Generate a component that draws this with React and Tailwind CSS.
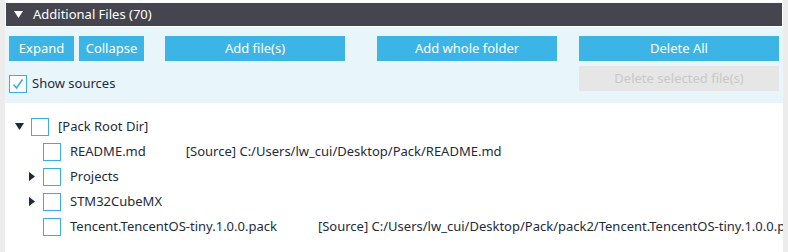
const font = { fontFamily: '"Noto Sans", "Open Sans", sans-serif' };

function Box({ checked }) {
  return (
    <span className="flex h-[18px] w-[18px] shrink-0 items-center justify-center border border-[#3aaee0] bg-white">
      {checked && (
        <svg width="12" height="12" viewBox="0 0 12 12" fill="none">
          <path d="M1.5 6.5 L4.5 10 L10.5 1.5" stroke="#3aaee0" strokeWidth="1.6" />
        </svg>
      )}
    </span>
  );
}

function Caret({ open }) {
  return open ? (
    <svg width="9" height="7" viewBox="0 0 9 7">
      <path d="M0 0 H9 L4.5 7 Z" fill="#1b2a3f" />
    </svg>
  ) : (
    <svg width="6" height="9" viewBox="0 0 6 9">
      <path d="M0 0 L6 4.5 L0 9 Z" fill="#1b2a3f" />
    </svg>
  );
}

function Btn({ w, children, className = '' }) {
  return (
    <button className={`h-[25px] ${w} bg-[#3db4e6] text-[13px] text-white ${className}`}>
      {children}
    </button>
  );
}

const rows = [
  { depth: 0, caret: 'open', name: '[Pack Root Dir]' },
  { depth: 1, name: 'README.md', src: '[Source] C:/Users/lw_cui/Desktop/Pack/README.md', srcX: 'ml-[40px]' },
  { depth: 1, caret: 'closed', name: 'Projects' },
  { depth: 1, caret: 'closed', name: 'STM32CubeMX' },
  {
    depth: 1,
    name: 'Tencent.TencentOS-tiny.1.0.0.pack',
    src: '[Source] C:/Users/lw_cui/Desktop/Pack/pack2/Tencent.TencentOS-tiny.1.0.0.pack',
    srcX: 'ml-[41px]',
  },
];

export default function App() {
  return (
    <div className="flex h-[252px] w-[788px] overflow-hidden bg-white text-[#1e2b3c]" style={font}>
      <div className="w-[5px] shrink-0 bg-[#ececec]" />
      <div className="flex min-w-0 flex-1 flex-col pt-[3px]">
        <div className="ml-[1px] mr-[1px] flex h-[23px] items-center bg-[#45454f] pl-[8px] text-[13px] text-white">
          <svg width="9" height="7" viewBox="0 0 9 7">
            <path d="M0 0 H9 L4.5 7 Z" fill="#ffffff" />
          </svg>
          <span className="ml-[10px]">Additional Files (70)</span>
        </div>
        <div className="mt-[1px] flex h-[76px] flex-col bg-[#e8f6fc] pl-[4px] pt-[9px]">
          <div className="flex">
            <Btn w="w-[65px]">Expand</Btn>
            <Btn w="w-[65px]" className="ml-[5px]">Collapse</Btn>
            <Btn w="w-[180px]" className="ml-[21px]">Add file(s)</Btn>
            <Btn w="w-[180px]" className="ml-[32px]">Add whole folder</Btn>
            <Btn w="w-[200px]" className="ml-[22px]">Delete All</Btn>
          </div>
          <div className="mt-[5px] flex">
            <label className="flex items-center self-start pt-[8px]">
              <Box checked />
              <span className="ml-[5px] text-[13px]">Show sources</span>
            </label>
            <button className="ml-auto mr-[4px] h-[25px] w-[200px] bg-[#e6e6e6] text-[13px] text-[#c9c9c9]">
              Delete selected file(s)
            </button>
          </div>
        </div>
        <div className="flex flex-col pt-[11px]">
          {rows.map((r) => (
            <div key={r.name} className="flex h-[25px] items-center whitespace-nowrap text-[13px]">
              <span
                className={`flex w-[12px] shrink-0 justify-center ${
                  r.depth ? 'ml-[21px] mr-[5px]' : 'ml-[8px] mr-[6px]'
                }`}
              >
                {r.caret && <Caret open={r.caret === 'open'} />}
              </span>
              <Box />
              <span className="ml-[9px]">{r.name}</span>
              {r.src && <span className={r.srcX}>{r.src}</span>}
            </div>
          ))}
        </div>
      </div>
      <div className="w-[5px] shrink-0 bg-[#ececec]" />
    </div>
  );
}
